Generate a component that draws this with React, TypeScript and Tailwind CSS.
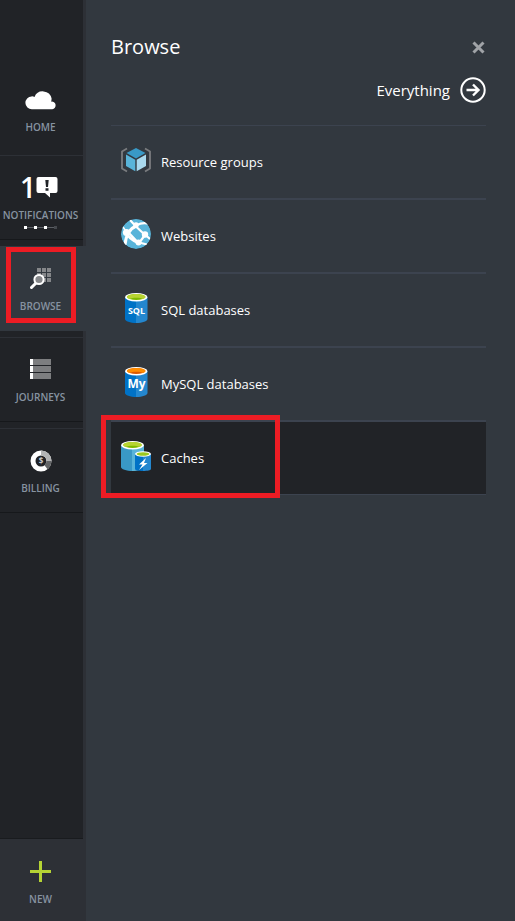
import type { ReactNode } from "react";

function CloudIcon() {
  return (
    <svg width="32" height="20" viewBox="0 0 32 20" fill="#fff" aria-hidden="true">
      <path d="M7 19.200a6.400 6.400 0 0 1-.4-12.800c1-.1 2 .1 2.900.500A9 9 0 0 1 26.600 8.500c0 1.100-.2 2.200-.5 3.200A3.800 3.800 0 1 1 27.300 19.200z" />
    </svg>
  );
}

function AlertIcon() {
  return (
    <svg width="22" height="21" viewBox="0 0 22 21" aria-hidden="true">
      <path fill="#fff" d="M2.500 0h17A2 2 0 0 1 21.500 2v12a2 2 0 0 1-2 2H14v4.500L9 16H2.500a2 2 0 0 1-2-2V2a2 2 0 0 1 2-2z" />
      <path fill="#212327" d="M9.300 3h3.400l-.7 7h-2zM9.500 11.200h3v2.600h-3z" />
    </svg>
  );
}

function SearchGridIcon() {
  return (
    <svg width="22" height="22" viewBox="0 0 22 22" aria-hidden="true">
      <path fill="#85878a" d="M7 0h4v4H7zM12 0h4v4h-4zM17 0h4v4h-4zM7 5h4v4H7zM12 5h4v4h-4zM17 5h4v4h-4zM12 10h4v4h-4zM17 10h4v4h-4z" />
      <path d="M6 15l-4.500 4.500" stroke="#fff" strokeWidth="3" strokeLinecap="round" />
      <circle cx="9" cy="11.500" r="4.600" fill="#85878a" stroke="#fff" strokeWidth="2" />
    </svg>
  );
}

function ListIcon() {
  return (
    <svg width="22" height="22" viewBox="0 0 22 22" aria-hidden="true">
      <path fill="#7d7e80" d="M3 0h18v6H3zM3 7h18v6H3zM3 14h18v6H3z" />
      <path fill="#fff" d="M0 0h3v6H0zM0 7h3v6H0zM0 14h3v6H0z" />
    </svg>
  );
}

function BillingIcon() {
  return (
    <svg width="22" height="22" viewBox="0 0 22 22" aria-hidden="true">
      <circle cx="11" cy="11" r="8" fill="none" stroke="#fff" strokeWidth="5" />
      <path d="M11 3a8 8 0 0 1 8 8" fill="none" stroke="#b3b4b5" strokeWidth="5" />
      <path d="M19 11a8 8 0 0 1-3 6.200" fill="none" stroke="#636567" strokeWidth="5" />
      <text x="11" y="14" textAnchor="middle" fill="#c8c9ca" fontSize="8" fontWeight="700" fontFamily="'Open Sans', sans-serif">$</text>
    </svg>
  );
}

function PlusIcon() {
  return (
    <svg width="21" height="21" viewBox="0 0 21 21" aria-hidden="true">
      <path fill="#b5d334" d="M9 0h3v21H9zM0 9h21v3H0z" />
    </svg>
  );
}

function ResourceIcon() {
  return (
    <svg width="30" height="30" viewBox="0 0 30 30" aria-hidden="true">
      <path d="M6 3.500L1 6.500v17l5 3M24 3.500L29 6.500v17l-5 3" fill="none" stroke="#7a7c7f" strokeWidth="1.800" strokeLinejoin="round" />
      <path fill="#3999c6" d="M15 3l9.500 5L15 13.500 5.500 8z" />
      <path fill="#59b4d9" d="M5 9.500l9.300 5.300v11.400L5 21z" />
      <path fill="#a9d9ee" d="M25 9.500l-9.300 5.300v11.400L25 21z" />
    </svg>
  );
}

function WebIcon() {
  return (
    <svg width="30" height="30" viewBox="0 0 30 30" aria-hidden="true">
      <clipPath id="globe"><circle cx="15" cy="15" r="15" /></clipPath>
      <g clipPath="url(#globe)">
        <circle cx="15" cy="15" r="15" fill="#59b4d9" />
        <g fill="none" stroke="#fff">
          <path strokeWidth="2.200" d="M9 1l6 6.500L23.500 15.500M15 6.500C20 4 24 3.500 28 5M24 16l-6 8M7 13l10 10.500M24 15.500L29 20M18 23.500l8 2" />
          <path strokeWidth="3" d="M16 6.500C10 9 5 14 4 26M5 13C7 18 10 21 18 24" />
          <path strokeWidth="1.600" d="M2 8l4 6" />
        </g>
        <g fill="#fff">
          <circle cx="15" cy="6" r="2.800" />
          <circle cx="24" cy="15.500" r="3.200" />
          <circle cx="17.500" cy="23.500" r="3" />
          <circle cx="5.500" cy="13.500" r="3.600" />
        </g>
      </g>
    </svg>
  );
}

function DatabaseIcon({ label, top, low }: { label: string; top: string; low: string }) {
  return (
    <svg width="30" height="30" viewBox="0 0 30 30" aria-hidden="true">
      <path fill="#0072c6" d="M4 4v22c0 2.200 5 4 11.500 4V4z" />
      <path fill="#2487cf" d="M15 4v26c6.500 0 11.500-1.800 11.500-4V4z" />
      <ellipse cx="15.250" cy="4.200" rx="11.250" ry="4.200" fill="#fff" />
      <ellipse cx="15.250" cy="4" rx="9.200" ry="2.900" fill={low} />
      <path fill={top} d="M6 4c0-1.600 4-2.900 9.250-2.900S24.500 2.400 24.500 4c0 .8-1 1.400-2.400 1.900-1.600-.7-4-1.100-6.850-1.100s-5.200.4-6.850 1.100C7 5.400 6 4.800 6 4z" />
      <text x="15.500" y="21" textAnchor="middle" fill="#fff" fontSize={label === "My" ? 12 : 9} fontWeight="700" fontFamily="'Open Sans', sans-serif">{label}</text>
    </svg>
  );
}

function CacheIcon() {
  return (
    <svg width="30" height="30" viewBox="0 0 30 30" aria-hidden="true">
      <path fill="#3999c6" d="M0 4v22c0 2.200 5 4 12 4V4z" />
      <path fill="#59b4d9" d="M11 4v26c6.500 0 12-1.800 12-4V4z" />
      <ellipse cx="11.500" cy="4.200" rx="11.500" ry="4.200" fill="#fff" />
      <ellipse cx="11.500" cy="4" rx="9.300" ry="2.900" fill="#7fba00" />
      <path fill="#b8d432" d="M2.200 4c0-1.600 4-2.900 9.300-2.900s9.300 1.300 9.300 2.900c0 .8-1 1.400-2.400 1.900-1.600-.7-4-1.100-6.900-1.100s-5.200.4-6.900 1.100C3.200 5.400 2.200 4.800 2.200 4z" />
      <path fill="#0072c6" d="M14 13v15c0 1.200 3.500 2 8 2V13z" />
      <path fill="#2487cf" d="M22 13v17c4.500 0 8-.8 8-2V13z" />
      <ellipse cx="22" cy="13" rx="8" ry="2.800" fill="#fff" />
      <ellipse cx="22" cy="13" rx="6.300" ry="1.800" fill="#9bc81e" />
      <path fill="#fff" d="M25 17l-7 6.500h3.500L18 29l8.500-7H23z" />
    </svg>
  );
}

type NavProps = { label: string; icon: ReactNode; active?: boolean; dots?: boolean };

function NavItem({ label, icon, active, dots }: NavProps) {
  return (
    <li className={active ? "relative -mr-[3px] mb-[6px]" : "mb-[6px]"}>
      <button
        type="button"
        className={
          active
            ? "flex h-[85px] w-full flex-col items-center bg-[#32383f] pt-[19px] pr-[5px]"
            : "flex h-[85px] w-full flex-col items-center border-t border-b border-t-[#2d3036] border-b-[#16181b] pt-[18px] pr-[2px]"
        }
      >
        <span className="flex h-[27px] items-center justify-center">{icon}</span>
        <span className="mt-[7px] text-[10px] leading-[14px] font-semibold text-[#8793a1]">{label}</span>
        {dots && (
          <span className="mt-[4px] flex w-[33px] items-center justify-between bg-[linear-gradient(#5b5f65,#5b5f65)] bg-[length:100%_1px] bg-center bg-no-repeat">
            <span className="size-[3px] bg-white" />
            <span className="size-[3px] bg-white" />
            <span className="size-[3px] bg-white" />
            <span className="size-[3px] bg-[#45484d]" />
          </span>
        )}
      </button>
      {active && <span className="pointer-events-none absolute top-[1px] right-[10px] left-[6px] h-[76px] border-[5px] border-[#ed1c24]" />}
    </li>
  );
}

type RowProps = { label: string; icon: ReactNode; active?: boolean };

function BrowseRow({ label, icon, active }: RowProps) {
  return (
    <li className="relative">
      <a
        href="#"
        className={
          active
            ? "flex h-[74px] items-center gap-[10px] border-y border-[#3c434f] bg-[#212327] pl-[10px]"
            : "flex h-[74px] items-center gap-[10px] border-y border-[#3c434f] pl-[10px]"
        }
      >
        <span className="shrink-0 pb-1">{icon}</span>
        <span className="text-[13px] leading-[20px] text-white">{label}</span>
      </a>
      {active && <span className="pointer-events-none absolute -top-[6px] -left-[10px] h-[83px] w-[179px] border-[5px] border-[#ed1c24]" />}
    </li>
  );
}

export default function App() {
  return (
    <div className="flex min-h-screen bg-[#32383f] font-['Open_Sans','Noto_Sans',sans-serif]">
      <nav className="flex w-[86px] shrink-0 flex-col border-r-[3px] border-[#2d3036] bg-[#212327]">
        <ul className="pt-[64px]">
          <li className="mb-[5px]">
            <button type="button" className="flex h-[86px] w-full flex-col items-center pt-[22px] pr-[2px]">
              <span className="flex h-[27px] items-center"><CloudIcon /></span>
              <span className="mt-[7px] text-[10px] leading-[14px] font-semibold text-[#8793a1]">HOME</span>
            </button>
          </li>
          <NavItem
            label="NOTIFICATIONS"
            dots
            icon={
              <span className="flex items-center pr-[3px]">
                <span className="text-[28px] leading-[27px] font-semibold text-white">1</span>
                <AlertIcon />
              </span>
            }
          />
          <NavItem label="BROWSE" active icon={<SearchGridIcon />} />
          <NavItem label="JOURNEYS" icon={<ListIcon />} />
          <NavItem label="BILLING" icon={<BillingIcon />} />
        </ul>
        <button type="button" className="mt-auto flex h-[83px] flex-col items-center border-t border-[#191b1e] bg-[#2d3036] pt-[22px] pr-[2px]">
          <PlusIcon />
          <span className="mt-[10px] text-[10px] leading-[14px] font-semibold text-[#8793a1]">NEW</span>
        </button>
      </nav>
      <main className="min-w-0 flex-1 pt-[32px] pr-[29px] pl-[25px]">
        <header className="flex items-center justify-between">
          <h1 className="text-[20px] leading-[30px] font-normal text-white">Browse</h1>
          <button type="button" aria-label="Close" className="pr-[1px]">
            <svg width="13" height="13" viewBox="0 0 13 13" aria-hidden="true">
              <path d="M1.500 1.500l10 10M11.500 1.500l-10 10" stroke="#a0a3a7" strokeWidth="3" />
            </svg>
          </button>
        </header>
        <a href="#" className="mt-[15px] ml-auto flex w-fit items-center gap-[10px] text-[15px] leading-[26px] text-white">
          Everything
          <svg width="26" height="26" viewBox="0 0 26 26" fill="none" stroke="#fff" aria-hidden="true">
            <circle cx="13" cy="13" r="11.700" strokeWidth="2" />
            <path d="M6.500 13h11M13 7.500l5.500 5.500-5.500 5.500" strokeWidth="2.400" />
          </svg>
        </a>
        <ul className="mt-[22px]">
          <BrowseRow label="Resource groups" icon={<ResourceIcon />} />
          <BrowseRow label="Websites" icon={<WebIcon />} />
          <BrowseRow label="SQL databases" icon={<DatabaseIcon label="SQL" top="#b8d432" low="#7fba00" />} />
          <BrowseRow label="MySQL databases" icon={<DatabaseIcon label="My" top="#ff8c00" low="#dd5900" />} />
          <BrowseRow label="Caches" active icon={<CacheIcon />} />
        </ul>
      </main>
    </div>
  );
}
